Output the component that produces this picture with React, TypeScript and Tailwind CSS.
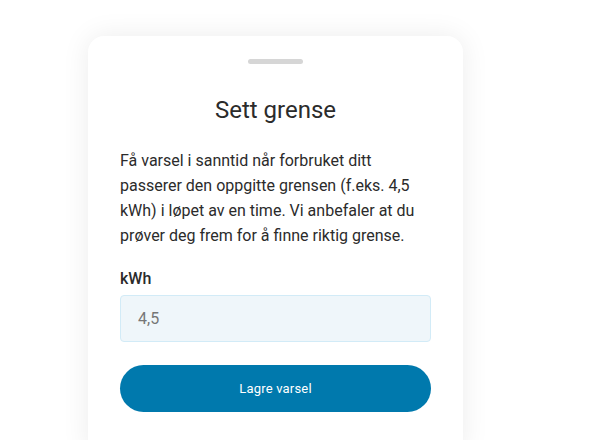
import React from 'react';

export default function App() {
  return (
    <div className="min-h-[440px] w-[590px] overflow-hidden bg-white pl-[88px] pt-[36px] font-['Roboto',sans-serif]">
      <div className="h-[420px] w-[375px] rounded-2xl bg-white px-8 pt-[23px] shadow-[0_0_28px_rgba(0,0,0,0.08)]">
        <div className="mx-auto h-[5px] w-[55px] rounded-full bg-[#d6d6d6]" />
        <h2 className="mt-[30px] text-center text-[24px] leading-[32px] text-[#2b2b2b]">Sett grense</h2>
        <p className="mt-[22px] text-[16px] leading-[25px] text-[#2b2b2b]">
          Få varsel i sanntid når forbruket ditt passerer den oppgitte grensen (f.eks. 4,5 kWh) i løpet av en
          time. Vi anbefaler at du prøver deg frem for å finne riktig grense.
        </p>
        <label className="mt-[19px] block text-[16px] font-medium leading-[24px] text-[#2b2b2b]">kWh</label>
        <input
          type="text"
          placeholder="4,5"
          className="mt-[4px] h-[47px] w-full rounded-[4px] border border-[#d2ebf7] bg-[#eff6fa] px-[17px] text-[16px] text-[#2b2b2b] placeholder:text-[#767676] outline-none"
        />
        <button className="mt-[23px] h-[47px] w-full rounded-full bg-[#0079ad] text-[13px] font-normal tracking-[0.2px] text-white">
          Lagre varsel
        </button>
      </div>
    </div>
  );
}
